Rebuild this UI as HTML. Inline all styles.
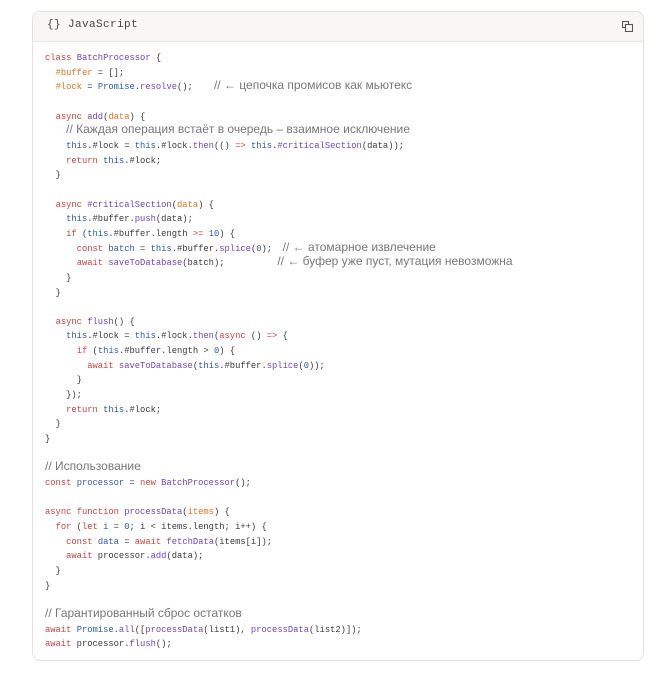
<!DOCTYPE html>
<html><head><meta charset="utf-8"><style>
body{margin:0;background:#fff;width:669px;height:677px;overflow:hidden}
.card{position:absolute;left:32px;top:11px;width:610px;height:648px;border:1px solid #e3e1dd;border-radius:8px;background:#fff;overflow:hidden}
.hd{height:29px;background:#f8f7f5;border-bottom:1px solid #ebe9e5;position:relative}
.hd span{position:absolute;left:14px;top:7px;font:11px "Liberation Mono",monospace;color:#444;letter-spacing:0.4px}
.cp{position:absolute;right:10px;top:9px;width:11px;height:11px}
pre{margin:0;position:absolute;left:12px;top:39px;font:8.8px/14.65px "Liberation Mono",monospace;color:#3a3a3a}
.k{color:#cf4242}.p{color:#e0731e}.f{color:#7045c0}.t{color:#2f5aa8}.n{color:#2f5aa8}
.c{color:#777;font-family:"Liberation Sans",sans-serif;font-size:12px;line-height:0}
</style></head><body>
<div class="card">
<div class="hd"><span>{} JavaScript</span>
<svg class="cp" viewBox="0 0 11 11" fill="none" stroke="#555" stroke-width="1.1"><rect x="0.5" y="0.5" width="6" height="6"/><rect x="3.5" y="3.5" width="7" height="7" fill="#f8f7f5"/></svg></div>
<pre><span class="k">class</span> <span class="f">BatchProcessor</span> {
  <span class="p">#buffer</span> = [];
  <span class="p">#lock</span> = <span class="t">Promise</span>.<span class="f">resolve</span>();    <span class="c">// ← цепочка промисов как мьютекс</span>

  <span class="k">async</span> <span class="f">add</span>(<span class="p">data</span>) {
    <span class="c">// Каждая операция встаёт в очередь – взаимное исключение</span>
    <span class="t">this</span>.#lock = <span class="t">this</span>.#lock.<span class="f">then</span>(() <span class="k">=&gt;</span> <span class="t">this</span>.<span class="f">#criticalSection</span>(data));
    <span class="k">return</span> <span class="t">this</span>.#lock;
  }

  <span class="k">async</span> <span class="f">#criticalSection</span>(<span class="p">data</span>) {
    <span class="t">this</span>.#buffer.<span class="f">push</span>(data);
    <span class="k">if</span> (<span class="t">this</span>.#buffer.length <span class="k">&gt;=</span> <span class="n">10</span>) {
      <span class="k">const</span> <span class="t">batch</span> = <span class="t">this</span>.#buffer.<span class="f">splice</span>(<span class="n">0</span>);  <span class="c">// ← атомарное извлечение</span>
      <span class="k">await</span> <span class="f">saveToDatabase</span>(batch);          <span class="c">// ← буфер уже пуст, мутация невозможна</span>
    }
  }

  <span class="k">async</span> <span class="f">flush</span>() {
    <span class="t">this</span>.#lock = <span class="t">this</span>.#lock.<span class="f">then</span>(<span class="k">async</span> () <span class="k">=&gt;</span> {
      <span class="k">if</span> (<span class="t">this</span>.#buffer.length &gt; <span class="n">0</span>) {
        <span class="k">await</span> <span class="f">saveToDatabase</span>(<span class="t">this</span>.#buffer.<span class="f">splice</span>(<span class="n">0</span>));
      }
    });
    <span class="k">return</span> <span class="t">this</span>.#lock;
  }
}

<span class="c">// Использование</span>
<span class="k">const</span> <span class="t">processor</span> = <span class="k">new</span> <span class="f">BatchProcessor</span>();

<span class="k">async</span> <span class="k">function</span> <span class="f">processData</span>(<span class="p">items</span>) {
  <span class="k">for</span> (<span class="k">let</span> <span class="t">i</span> = <span class="n">0</span>; i &lt; items.length; i++) {
    <span class="k">const</span> <span class="t">data</span> = <span class="k">await</span> <span class="f">fetchData</span>(items[i]);
    <span class="k">await</span> processor.<span class="f">add</span>(data);
  }
}

<span class="c">// Гарантированный сброс остатков</span>
<span class="k">await</span> <span class="t">Promise</span>.<span class="f">all</span>([<span class="f">processData</span>(list1), <span class="f">processData</span>(list2)]);
<span class="k">await</span> processor.<span class="f">flush</span>();</pre>
</div>
</body></html>
